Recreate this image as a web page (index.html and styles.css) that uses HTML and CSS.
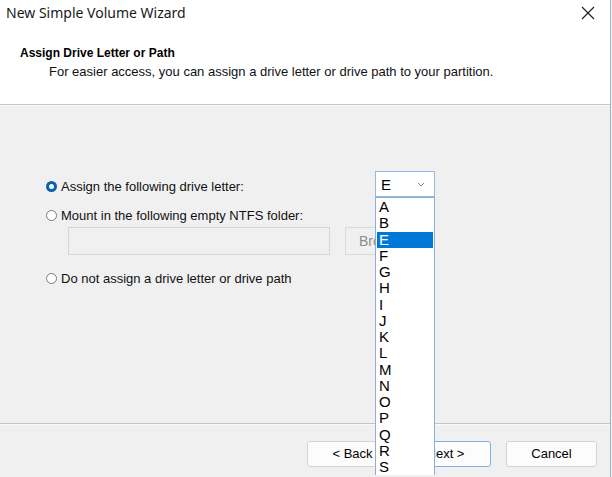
FILE: index.html
```html
<!DOCTYPE html>
<html>
<head>
<meta charset="utf-8">
<link rel="stylesheet" href="styles.css">
</head>
<body>
<div class="window">
  <div class="top">
    <div class="titlebar">
      <span class="title">New Simple Volume Wizard</span>
      <svg class="close" width="14" height="14" viewBox="0 0 14 14"><path d="M1 1 L13 13 M13 1 L1 13" stroke="#1a1a1a" stroke-width="1.1" fill="none"/></svg>
    </div>
    <div class="heading">Assign Drive Letter or Path</div>
    <div class="sub">For easier access, you can assign a drive letter or drive path to your partition.</div>
  </div>
  <div class="sep"></div>
  <div class="content">
    <div class="row row1">
      <span class="radio checked"></span>
      <span class="label">Assign the following drive letter:</span>
      <div class="select">
        <span>E</span>
        <svg class="chev" width="8" height="5" viewBox="0 0 8 5"><path d="M1 1 L4 4 L7 1" stroke="#8a8a8a" stroke-width="1" fill="none"/></svg>
      </div>
    </div>
    <div class="row row2">
      <span class="radio"></span>
      <span class="label">Mount in the following empty NTFS folder:</span>
    </div>
    <div class="pathrow">
      <div class="textbox"></div>
      <div class="browse">Browse...</div>
    </div>
    <div class="row row3">
      <span class="radio"></span>
      <span class="label">Do not assign a drive letter or drive path</span>
    </div>
  </div>
  <div class="sep sep2"></div>
  <div class="footer">
    <div class="btn">&lt; Back</div>
    <div class="btn primary">Next &gt;</div>
    <div class="btn cancel">Cancel</div>
  </div>
  <ul class="list">
    <li>A</li><li>B</li><li class="sel">E</li><li>F</li><li>G</li><li>H</li><li>I</li><li>J</li><li>K</li><li>L</li><li>M</li><li>N</li><li>O</li><li>P</li><li>Q</li><li>R</li><li>S</li>
  </ul>
</div>
</body>
</html>
```
FILE: styles.css
```css
html, body {
  margin: 0;
  padding: 0;
  background: #f0f0f0;
}
body {
  font-family: "Liberation Sans", Arial, sans-serif;
  font-size: 13px;
  color: #000;
}
.window {
  position: relative;
  width: 610px;
  height: 477px;
  overflow: hidden;
  background: #f0f0f0;
  border-right: 1px solid #9fb5cc;
}
.top {
  background: #fff;
  height: 104px;
}
.titlebar {
  height: 28px;
  display: flex;
  align-items: center;
  justify-content: space-between;
  padding: 0 14px 0 6px;
}
.title {
  font-family: "Noto Sans", "Open Sans", sans-serif;
  font-size: 14px;
  color: #1a1a1a;
  margin-top: -4px;
}
.close {
  margin-top: -3px;
  margin-right: 1px;
}
.heading {
  font-weight: bold;
  font-size: 12px;
  line-height: 16px;
  padding-left: 20px;
  margin-top: 17px;
}
.sub {
  font-size: 13px;
  line-height: 16px;
  padding-left: 49px;
  margin-top: 3px;
  color: #111;
}
.sep {
  height: 1px;
  background: #c4c4c4;
  border-bottom: 1px solid #fafafa;
}
.content {
  height: 317px;
  padding: 72px 0 0 46px;
  box-sizing: border-box;
}
.row {
  display: flex;
  align-items: center;
  height: 16px;
}
.radio {
  width: 9px;
  height: 9px;
  border: 1px solid #7a7a7a;
  border-radius: 50%;
  background: #fff;
  margin-right: 4px;
  box-sizing: content-box;
}
.radio.checked {
  width: 5px;
  height: 5px;
  border: 3px solid #0a5fb0;
}
.label {
  color: #111;
}
.row1 {
  width: 389px;
}
.select {
  margin-left: auto;
  margin-top: -4px;
  width: 60px;
  height: 26px;
  flex: none;
  border: 1px solid #93bbe2;
  background: #fff;
  display: flex;
  align-items: center;
  justify-content: space-between;
  padding: 0 9px 0 5px;
  box-sizing: border-box;
  font-size: 15px;
}
.chev {
  margin-top: 1px;
}
.row2 {
  margin-top: 13px;
}
.pathrow {
  display: flex;
  gap: 15px;
  margin: 4px 0 0 22px;
}
.textbox {
  width: 262px;
  height: 28px;
  border: 1px solid #d6d6d6;
  box-sizing: border-box;
  background: #f0f0f0;
}
.browse {
  width: 76px;
  height: 28px;
  border: 1px solid #dadada;
  box-sizing: border-box;
  background: #f0f0f0;
  color: #8d8d8d;
  font-size: 14px;
  line-height: 26px;
  padding-left: 13px;
}
.row3 {
  margin-top: 15px;
}
.sep2 {
  height: 1px;
}
.footer {
  display: flex;
  padding: 16px 0 0 307px;
  gap: 2px;
}
.btn {
  width: 91px;
  height: 26px;
  box-sizing: border-box;
  border: 1px solid #d3d3d3;
  border-radius: 3px;
  background: #fcfcfc;
  text-align: center;
  line-height: 24px;
  font-size: 13px;
}
.primary {
  border-color: #7fb0e3;
}
.cancel {
  margin-left: 13px;
}
.list {
  position: absolute;
  left: 375px;
  top: 197px;
  width: 60px;
  margin: 0;
  padding: 1px 1px 0;
  list-style: none;
  background: #fff;
  border: 1px solid #8fb0d2;
  border-bottom: none;
  box-sizing: border-box;
  font-size: 15px;
}
.list li {
  height: 16.25px;
  line-height: 16.25px;
  padding-left: 2px;
}
.list li.sel {
  background: #0078d7;
  color: #fff;
}
```
